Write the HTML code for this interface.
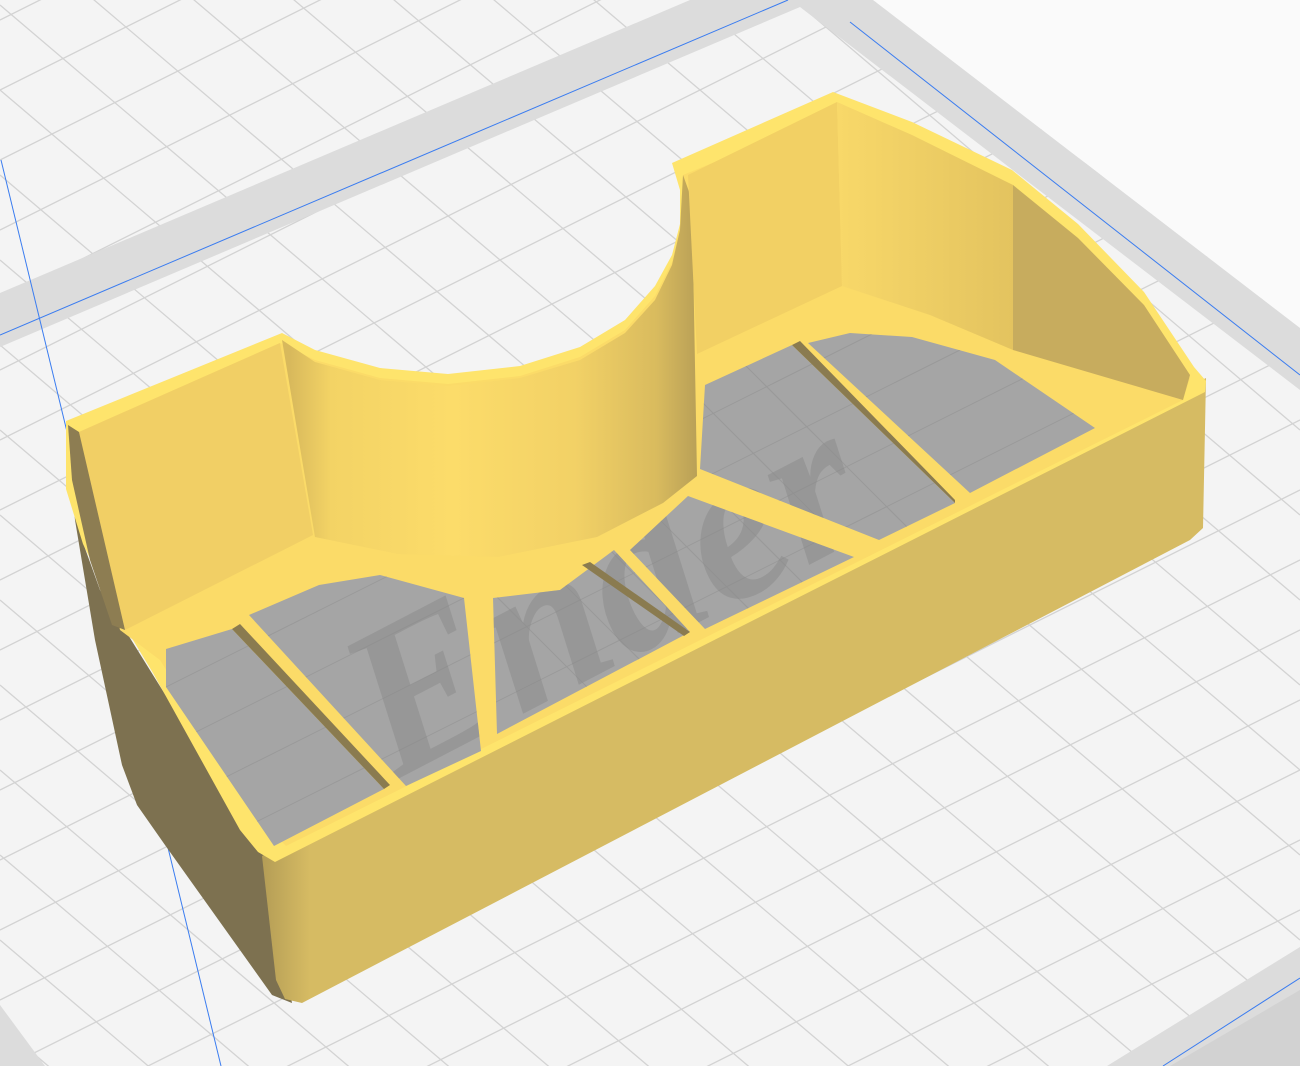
<!DOCTYPE html>
<html><head><meta charset="utf-8"><style>html,body{margin:0;padding:0;background:#fafafa;width:1300px;height:1066px;overflow:hidden}svg{display:block}</style></head>
<body>
<svg width="1300" height="1066" viewBox="0 0 1300 1066" xmlns="http://www.w3.org/2000/svg">
<defs>
<linearGradient id="cyl" x1="290" y1="0" x2="697" y2="0" gradientUnits="userSpaceOnUse">
<stop offset="0" stop-color="#d8b95c"/><stop offset="0.1" stop-color="#f3d365"/><stop offset="0.4" stop-color="#fcdc6a"/><stop offset="0.7" stop-color="#f2d166"/><stop offset="0.9" stop-color="#d9bb5e"/><stop offset="1" stop-color="#b9a057"/>
</linearGradient>
<linearGradient id="front" x1="262" y1="0" x2="310" y2="0" gradientUnits="userSpaceOnUse">
<stop offset="0" stop-color="#b49d56"/><stop offset="1" stop-color="#d6bb63"/>
</linearGradient>
<linearGradient id="curv" x1="837" y1="0" x2="1013" y2="0" gradientUnits="userSpaceOnUse">
<stop offset="0" stop-color="#f8d869"/><stop offset="1" stop-color="#e3c35f"/>
</linearGradient>
<clipPath id="cells">
<polygon points="166,649 232,629 384,789 274,846 166,687"/>
<polygon points="249,615 319,585 380,575 464,598 481,751 406,786"/>
<polygon points="493,598 560,590 614,550 690,632 497,734"/>
<polygon points="630,550 688,496 854,557 705,629"/>
<polygon points="700,469 705,385 792,345 955,503 879,540"/>
<polygon points="808,343 850,333 912,337 995,360 1045,394 1095,428 970,493"/>
</clipPath>
</defs>
<!-- bed -->
<polygon points="0,0 873,0 1300,328 1300,1066 0,1066" fill="#f4f4f4"/>
<g stroke="#d3d3d3" stroke-width="1.3" fill="none">
<path d="M0 20L1300 -630M0 90L1300 -560M0 160L1300 -490M0 230L1300 -420M0 300L1300 -350M0 370L1300 -280M0 440L1300 -210M0 510L1300 -140M0 580L1300 -70M0 650L1300 0M0 720L1300 70M0 790L1300 140M0 860L1300 210M0 930L1300 280M0 1000L1300 350M0 1070L1300 420M0 1140L1300 490M0 1210L1300 560M0 1280L1300 630M0 1350L1300 700M0 1420L1300 770M0 1490L1300 840M0 1560L1300 910M0 1630L1300 980M0 1700L1300 1050"/>
<path d="M0 -1100L1300 5M0 -1015L1300 90M0 -930L1300 175M0 -845L1300 260M0 -760L1300 345M0 -675L1300 430M0 -590L1300 515M0 -505L1300 600M0 -420L1300 685M0 -335L1300 770M0 -250L1300 855M0 -165L1300 940M0 -80L1300 1025M0 5L1300 1110M0 90L1300 1195M0 175L1300 1280M0 260L1300 1365M0 345L1300 1450M0 430L1300 1535M0 515L1300 1620M0 600L1300 1705M0 685L1300 1790M0 770L1300 1875M0 855L1300 1960M0 940L1300 2045M0 1025L1300 2130"/>
</g>
<polygon points="873,0 1300,0 1300,328" fill="#fafafa"/>
<!-- bands -->
<polygon points="0,293 690,0 873,0 1300,328 1300,390 800,7 0,347" fill="#dcdcdc"/>
<polygon points="1107,1066 1300,947 1300,1066" fill="#dcdcdc"/>
<polygon points="1170,1066 1300,990 1300,1066" fill="#d2d2d2"/>
<polygon points="0,1005 45,1066 0,1066" fill="#dcdcdc"/>
<!-- blue lines -->
<g stroke="#3a7cf0" stroke-width="1" fill="none">
<path d="M0 335L788 0"/>
<path d="M850 22L1300 375"/>
<path d="M1163 1066L1300 978"/>
<path d="M1 160L221 1066"/>
</g>
<!-- left exterior face -->
<polygon points="66,425 70,480 82,540 100,590 125,630 265,855 292,1003 272,995 165,845 137,805 122,765 95,640 75,520" fill="#7d7150"/>
<!-- front face -->
<polygon points="262,856 1206,378 1203,528 1190,540 302,1003 285,999 276,980" fill="url(#front)"/>
<!-- rim/top base -->
<polygon points="66,421 282,333 315,350 380,368 448,374 520,366 580,347 625,320 655,286 672,255 680,224 680,190 672,163 833,92 912,122 1012,170 1078,224 1144,292 1194,367 1206,381 1205,392 275,862 258,852 240,830 153,673 116,612 83,544 66,489" fill="#fee46c"/>
<!-- inner floor base ledge -->
<polygon points="79,432 280,343 315,360 380,378 448,384 520,376 580,357 625,330 655,296 672,262 680,228 683,175 842,110 1013,185 1190,378 1183,400 286,846 260,820 160,660 120,630" fill="#fbdb68"/>
<!-- back-left wall -->
<polygon points="79,432 280,343 313,535 125,630" fill="#f1cf65"/>
<polygon points="68,425 79,432 125,630 112,625 90,560 72,480" fill="#8d7d52"/>
<!-- cylinder wall -->
<polygon points="282,340 315,362 380,380 448,386 520,378 580,360 625,333 655,300 672,265 680,230 683,175 692,200 697,476 663,503 597,537 498,557 398,554 315,537" fill="url(#cyl)"/>
<!-- right back wall -->
<polygon points="688,175 837,102 842,286 697,354" fill="#f2d064"/>
<!-- curved right wall -->
<polygon points="837,102 912,135 1013,185 1013,350 930,315 842,286" fill="url(#curv)"/>
<polygon points="1013,185 1078,238 1144,305 1190,375 1183,400 1013,350" fill="#c7ac5e"/>
<!-- floor cells -->
<g clip-path="url(#cells)">
<rect x="100" y="300" width="1100" height="600" fill="#a5a5a5"/>
<g stroke="#999999" stroke-width="1" fill="none">
<path d="M100 600L1200 50M100 660L1200 110M100 720L1200 170M100 780L1200 230M100 840L1200 290M100 900L1200 350M100 960L1200 410"/>
<path d="M200 300L700 800M280 300L780 800M360 300L860 800M440 300L940 800M520 300L1020 800M600 300L1100 800M680 300L1180 800"/>
</g>
<text x="0" y="0" transform="translate(392,782) rotate(-27.5)" font-family="Liberation Serif, serif" font-style="italic" font-weight="bold" font-size="215" fill="#8a8a8a" fill-opacity="0.5">Ender</text>
</g>
<!-- divider shading -->
<polygon points="232,629 240,624 390,785 384,789" fill="#8a7b50"/>
<polygon points="582,565 590,562 690,632 684,636" fill="#8a7b50"/>
<polygon points="792,345 800,341 955,500 955,503" fill="#8a7b50"/>
</svg>
</body></html>
